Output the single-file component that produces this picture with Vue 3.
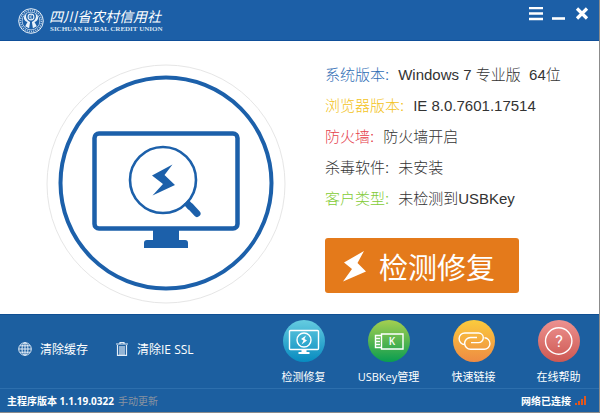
<template>
  <div class="window">
    <header class="titlebar">
      <div class="brand">
        <svg class="emblem" viewBox="0 0 28 28" fill="none" stroke="#e8f1fa">
          <circle cx="14" cy="14" r="12.3" stroke-width="1" />
          <circle cx="14" cy="14" r="10.6" stroke-width="1.6" stroke-dasharray="1.2 1" opacity="0.7" />
          <circle cx="14" cy="14" r="8.9" stroke-width="0.7" />
          <circle cx="14" cy="10" r="2.9" stroke-width="1.1" />
          <path d="M15 9.2a1.2 1.2 0 1 0 0 1.6" stroke-width="0.8" />
          <path d="M9.7 6.8C5.5 9 6.3 14 10.5 15.1L8.2 19.2l3.9 2 1-6.2C9.7 13.5 8 10 9.7 6.8zM18.3 6.8C22.5 9 21.7 14 17.5 15.1l2.3 4.1-3.9 2-1-6.2c3.4-1.5 5.1-5 3.4-8.2z" fill="#e8f1fa" stroke="none" />
        </svg>
        <div class="brand-text">
          <span class="brand-cn">四川省农村信用社</span>
          <span class="brand-en">SICHUAN RURAL CREDIT UNION</span>
        </div>
      </div>
      <div class="controls">
        <button aria-label="菜单">
          <svg viewBox="0 0 14 14"><path d="M0 1h14M0 6.500h14M0 12h14" stroke="#fff" stroke-width="2.6" /></svg>
        </button>
        <button aria-label="最小化">
          <svg viewBox="0 0 14 14"><path d="M0 11.500h13" stroke="#fff" stroke-width="2.6" /></svg>
        </button>
        <button aria-label="关闭">
          <svg viewBox="0 0 14 14"><path d="M2 1.500l10 10M12 1.500L2 11.500" stroke="#fff" stroke-width="3.2" /></svg>
        </button>
      </div>
    </header>

    <main class="content">
      <svg class="hero" viewBox="0 0 240 240" fill="none">
        <circle cx="120" cy="120" r="119" stroke="#e6e6e6" />
        <circle cx="120" cy="119" r="105.5" stroke="#1c60aa" stroke-width="4" />
        <rect x="48.5" y="69.5" width="143" height="95" rx="4.5" stroke="#1c60aa" stroke-width="4.5" />
        <path d="M107 166h26v10h6q3 0 3 3v5H98v-5q0-3 3-3h6z" fill="#1c60aa" />
        <circle cx="117" cy="116" r="33" stroke="#1c60aa" stroke-width="2.6" />
        <path d="M140 138l5 5.500" stroke="#1c60aa" stroke-width="7" />
        <path d="M145 143l6 6.500" stroke="#1c60aa" stroke-width="7" stroke-linecap="round" />
        <path d="M126.500 100.500L106 111.500 117 120 106.500 131.500 129 121 118.500 111z" fill="#1c60aa" />
      </svg>
      <section class="status">
        <dl>
          <div v-for="item in items" :key="item.label" class="row">
            <dt :class="item.tone">{{ item.label }}:</dt>
            <dd>{{ item.value }}</dd>
          </div>
        </dl>
        <button class="repair">
          <svg viewBox="0 0 24 32"><path d="M21 1L1 12.500 9 19 0 31.500 23 21.500 14.500 13z" fill="#fff" /></svg>
          <span>检测修复</span>
        </button>
      </section>
    </main>

    <footer>
      <div class="toolbar">
        <div class="links">
          <button>
            <svg viewBox="0 0 14 14" fill="none" stroke="#e3edf7">
              <circle cx="7" cy="7" r="6.3" />
              <ellipse cx="7" cy="7" rx="3" ry="6.3" />
              <path d="M7 1v12M1 7h12M2 3.800h10M2 10.200h10" />
            </svg>
            <span>清除缓存</span>
          </button>
          <button>
            <svg viewBox="0 0 14 14" fill="none" stroke="#e3edf7">
              <path d="M5 1.500V.500h4v1M1 2h12M2.500 3v10.300h9V3M5 4v9M7 4v9M9 4v9" stroke-width="1.2" />
            </svg>
            <span>清除IE SSL</span>
          </button>
        </div>
        <nav class="actions">
          <button v-for="action in actions" :key="action.id">
            <span class="bubble" :class="action.id">
              <svg viewBox="0 0 42 42" fill="none" stroke="#fff" stroke-width="1.4">
                <template v-if="action.id === 'check'">
                  <rect x="6.5" y="10.5" width="29" height="19" rx="1" />
                  <circle cx="21" cy="20" r="7" />
                  <path d="M23 15.500l-5 3.500 2.500 1.500-2 4 5.500-4-2.500-1.500z" fill="#fff" stroke="none" />
                  <path d="M18.500 30h5v2h3v2h-11v-2h3z" fill="#fff" stroke="none" />
                </template>
                <template v-else-if="action.id === 'usbkey'">
                  <path d="M13.500 14h21.500v15H13.500zM13.500 15.500H7.500v12h6M8 18.500h4M8 21.500h4M8 24.500h4" />
                  <text class="key-letter" x="24" y="25" text-anchor="middle">K</text>
                </template>
                <template v-else-if="action.id === 'link'">
                  <path d="M11.500 24.500H11.700A5.600 5.600 0 0 1 12 13h13.500a4.800 4.800 0 0 1 0 9.600H18" />
                  <path d="M24 17.500h-6.500a5.800 5.800 0 0 0 0 11.700H31a5.700 5.700 0 0 0 .500-11.400" />
                </template>
                <template v-else>
                  <circle cx="20.7" cy="21" r="13.2" />
                  <text class="question" x="21" y="26.5" text-anchor="middle">?</text>
                </template>
              </svg>
            </span>
            <span>{{ action.label }}</span>
          </button>
        </nav>
      </div>
      <div class="statusbar">
        <div class="version">
          <strong>主程序版本 1.1.19.0322</strong>
          <a href="#">手动更新</a>
        </div>
        <div class="network">
          <strong>网络已连接</strong>
          <svg viewBox="0 0 11 9"><path d="M0 7h2v2H0zM3 5h2v4H3zM6 3h2v6H6zM9 0h2v9H9z" fill="#e2571c" /></svg>
        </div>
      </div>
    </footer>
  </div>
</template>

<script setup>
const items = [
  { label: '系统版本', value: 'Windows 7 专业版  64位', tone: 'blue' },
  { label: '浏览器版本', value: 'IE 8.0.7601.17514', tone: 'yellow' },
  { label: '防火墙', value: '防火墙开启', tone: 'red' },
  { label: '杀毒软件', value: '未安装', tone: 'gray' },
  { label: '客户类型', value: '未检测到USBKey', tone: 'green' }
]

const actions = [
  { id: 'check', label: '检测修复' },
  { id: 'usbkey', label: 'USBKey管理' },
  { id: 'link', label: '快速链接' },
  { id: 'help', label: '在线帮助' }
]
</script>

<style>
body {
  margin: 0;
}
</style>

<style scoped>
.window {
  display: flex;
  flex-direction: column;
  min-height: 100vh;
  box-sizing: border-box;
  border-right: 1px solid #8c8c8c;
  border-bottom: 1px solid #8c8c8c;
  background: #fff;
  color: #fff;
  font-family: "Open Sans", "Noto Sans CJK SC", sans-serif;
}
button {
  padding: 0;
  border: none;
  background: none;
  color: inherit;
  font: inherit;
  cursor: pointer;
}
svg {
  display: block;
}
.titlebar {
  display: flex;
  justify-content: space-between;
  align-items: flex-start;
  height: 41px;
  box-sizing: border-box;
  padding: 7px 10px 0 17px;
  background: #1c5fa7;
  border-bottom: 1px solid #0f4f99;
}
.brand {
  display: flex;
  gap: 4px;
}
.emblem {
  width: 28px;
  height: 28px;
}
.brand-text {
  display: flex;
  flex-direction: column;
}
.brand-cn {
  font-family: "Noto Sans CJK SC", sans-serif;
  font-size: 14px;
  font-style: italic;
  line-height: 18px;
}
.brand-en {
  padding-left: 1px;
  color: #d5e3f2;
  font-family: "Liberation Serif", serif;
  font-size: 7px;
  font-weight: bold;
  line-height: 8px;
}
.controls {
  display: flex;
  gap: 9px;
}
.controls svg {
  width: 14px;
  height: 14px;
}
.content {
  display: flex;
  flex: 1;
  padding: 23px 16px 10px 46px;
}
.hero {
  flex: none;
  width: 240px;
  height: 240px;
}
.status {
  padding-left: 39px;
}
dl {
  margin: 0 0 19px;
}
.row {
  display: flex;
  gap: 9px;
  height: 31px;
  color: #333;
  font-family: "Liberation Sans", "Noto Sans CJK SC", sans-serif;
  font-size: 15px;
  font-weight: 300;
  line-height: 22px;
  white-space: pre;
}
dd {
  margin: 0;
}
.blue {
  color: #2f6db5;
}
.yellow {
  color: #f3c321;
}
.red {
  color: #e5414c;
}
.green {
  color: #83cb36;
}
.repair {
  display: flex;
  align-items: center;
  gap: 12px;
  width: 194px;
  height: 55px;
  padding-left: 18px;
  border-radius: 3px;
  background: #e47a1b;
  font-family: "Noto Sans CJK SC", sans-serif;
  font-size: 29px;
  line-height: 40px;
}
.repair svg {
  width: 24px;
  height: 32px;
}
.toolbar {
  display: flex;
  justify-content: space-between;
  height: 74px;
  box-sizing: border-box;
  background: #1c5fa0;
  border-top: 1px solid #0f4f93;
}
.links {
  display: flex;
  align-items: center;
  gap: 27px;
  padding: 0 0 6px 18px;
  font-size: 12px;
}
.links button {
  display: flex;
  align-items: center;
  gap: 8px;
}
.links svg {
  width: 14px;
  height: 14px;
}
.actions {
  display: flex;
  gap: 4px;
}
.actions button {
  display: flex;
  flex-direction: column;
  align-items: center;
  gap: 6px;
  width: 81px;
  padding-top: 5px;
  font-size: 11px;
  line-height: 18px;
}
.bubble {
  width: 42px;
  height: 42px;
  border-radius: 50%;
}
.check {
  background: linear-gradient(#65cce0, #078bc0);
}
.usbkey {
  background: linear-gradient(#a5cf50, #099d50);
}
.link {
  background: linear-gradient(#fbcb3d, #ee8b43);
}
.help {
  background: linear-gradient(#ed9290, #cd5852);
}
.key-letter,
.question {
  fill: #fff;
  stroke: none;
  font-size: 10px;
}
.key-letter {
  font-weight: 600;
}
.question {
  font-family: Roboto, sans-serif;
  font-size: 16px;
}
.statusbar {
  display: flex;
  justify-content: space-between;
  align-items: center;
  height: 24px;
  box-sizing: border-box;
  padding: 0 13px 0 7px;
  border-top: 1px solid #2d6fad;
  background: #1c5fa0;
  font-size: 10px;
}
.version,
.network {
  display: flex;
  align-items: center;
  gap: 4px;
}
.version a {
  color: #8993a0;
  text-decoration: none;
}
.network svg {
  width: 11px;
  height: 9px;
}
</style>
